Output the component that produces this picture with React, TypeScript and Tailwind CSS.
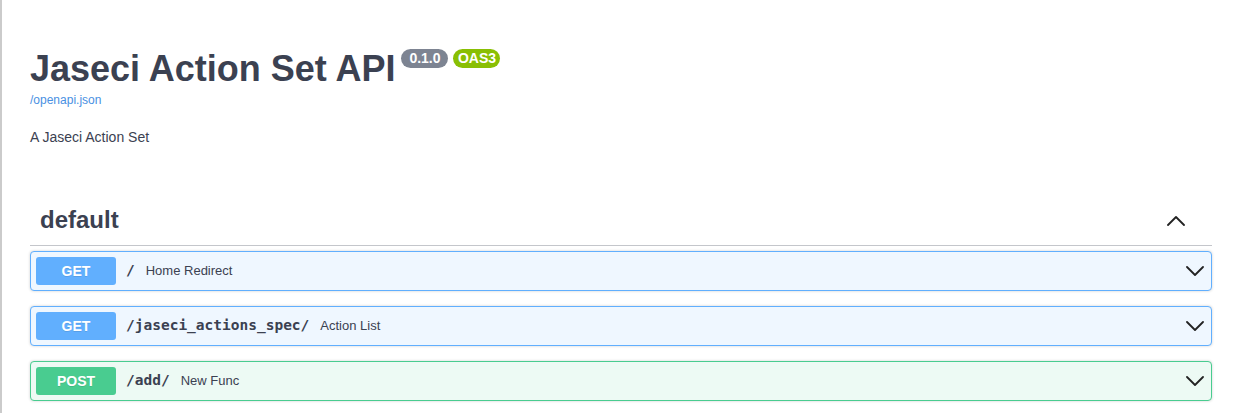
interface Operation {
  method: 'GET' | 'POST'
  path: string
  summary: string
}

const operations: Operation[] = [
  { method: 'GET', path: '/', summary: 'Home Redirect' },
  { method: 'GET', path: '/jaseci_actions_spec/', summary: 'Action List' },
  { method: 'POST', path: '/add/', summary: 'New Func' },
]

const methodStyles = {
  GET: {
    block: 'border-[#61affe] bg-[#eff7ff]',
    badge: 'bg-[#61affe]',
  },
  POST: {
    block: 'border-[#49cc90] bg-[#edfaf4]',
    badge: 'bg-[#49cc90]',
  },
}

const sans = 'font-["Liberation_Sans",Arial,sans-serif]'

function Chevron({ up = false }: { up?: boolean }) {
  return (
    <svg width="18" height="11" viewBox="0 0 18 11" fill="none" className="shrink-0">
      <polyline
        points={up ? '1,10 9,2 17,10' : '1,1 9,9 17,1'}
        stroke="#222"
        strokeWidth="1.8"
        strokeLinecap="round"
        strokeLinejoin="round"
      />
    </svg>
  )
}

function OperationRow({ op }: { op: Operation }) {
  const style = methodStyles[op.method]

  return (
    <div
      className={`mb-[15px] flex h-[40px] items-center rounded-[4px] border pl-[5px] pr-[7px] shadow-[0_0_3px_rgba(0,0,0,0.19)] ${style.block}`}
    >
      <span
        className={`flex h-[28px] w-[80px] items-center justify-center rounded-[3px] text-[14px] font-bold text-white [text-shadow:0_1px_0_rgba(0,0,0,0.1)] ${style.badge}`}
      >
        {op.method}
      </span>
      <span className='px-[10px] font-["DejaVu_Sans_Mono",monospace] text-[14.5px] font-bold text-[#3b4151]'>
        {op.path}
      </span>
      <span className="ml-[1px] text-[13px] text-[#3b4151]">{op.summary}</span>
      <span className="ml-auto">
        <Chevron />
      </span>
    </div>
  )
}

export default function App() {
  return (
    <div className={`min-h-[413px] border-l-2 border-[#cbcbcb] bg-white px-[28px] pt-[49px] ${sans}`}>
      <div className="flex items-start">
        <h2 className="mt-[2px] text-[36px] font-bold leading-[36px] text-[#3b4151]">Jaseci Action Set API</h2>
        <span className="ml-[6px] flex h-[19px] w-[47px] items-center justify-center rounded-full bg-[#7d8492] text-[14px] font-bold text-white">
          0.1.0
        </span>
        <span className="ml-[5px] flex h-[19px] w-[47px] items-center justify-center rounded-full bg-[#89bf04] text-[14px] font-bold text-white">
          OAS3
        </span>
      </div>
      <a className="mt-[6px] block text-[12px] leading-[15px] text-[#4990e2]">/openapi.json</a>
      <p className="mt-[21px] text-[14px] leading-[16px] text-[#3b4151]">A Jaseci Action Set</p>

      <div className="mt-[50px] flex h-[51px] items-center border-b border-[#c4c6cb] pl-[10px] pr-[27px]">
        <h3 className="text-[24px] font-bold leading-[30px] text-[#3b4151]">default</h3>
        <span className="ml-auto">
          <Chevron up />
        </span>
      </div>

      <div className="mt-[5px]">
        {operations.map((op) => (
          <OperationRow key={op.path} op={op} />
        ))}
      </div>
    </div>
  )
}
